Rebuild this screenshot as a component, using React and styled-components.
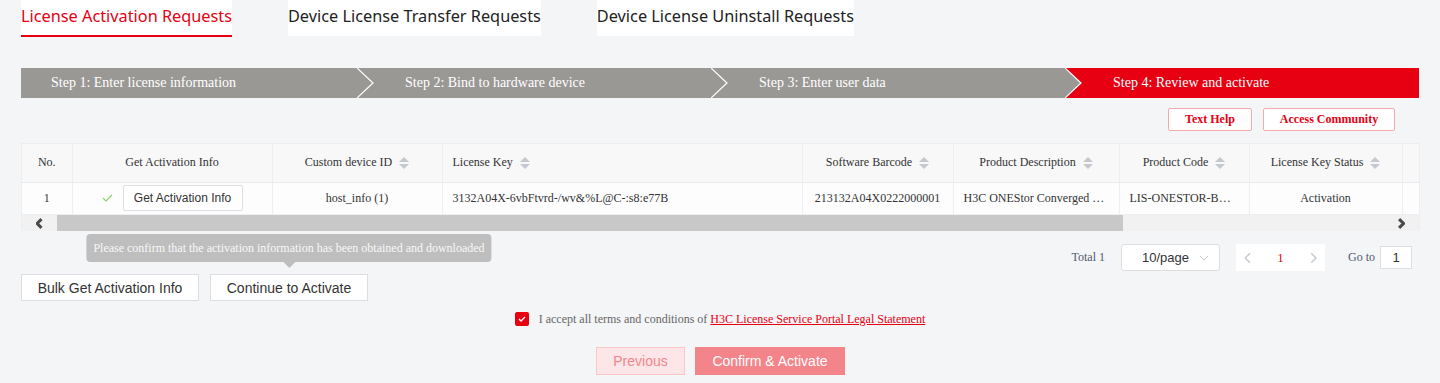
import React from "react";
import styled, { createGlobalStyle } from "styled-components";

const Global = createGlobalStyle`
  html, body { margin: 0; padding: 0; background: #f4f5f7; }
  body { font-family: "Liberation Serif", serif; color: #333; }
  * { box-sizing: border-box; }
`;

const Page = styled.div`
  width: 1440px;
  height: 383px;
  padding-left: 21px;
  overflow: hidden;
`;

const Tabs = styled.div`
  display: flex;
  gap: 56px;
  height: 37px;
`;

const Tab = styled.div`
  background: #fff;
  height: ${(p) => (p.$active ? "37px" : "36px")};
  font-family: "Noto Sans", sans-serif;
  font-size: 16.3px;
  line-height: 32px;
  color: ${(p) => (p.$active ? "#e60012" : "#222")};
  border-bottom: ${(p) => (p.$active ? "2px solid #e60012" : "none")};
  white-space: nowrap;
`;

const Steps = styled.div`
  display: flex;
  width: 1398px;
  height: 30px;
  margin-top: 31px;
`;

const Step = styled.div`
  position: relative;
  flex: ${(p) => (p.$first ? "0 0 336px" : "1 1 0")};
  background: ${(p) => (p.$active ? "#e60012" : "#9a9895")};
  color: #fff;
  font-size: 14px;
  line-height: 30px;
  padding-left: ${(p) => (p.$first ? "30px" : "48px")};
  white-space: nowrap;
`;

const Chevron = styled.svg`
  position: absolute;
  left: 0;
  top: 0;
`;

const HelpRow = styled.div`
  display: flex;
  justify-content: flex-end;
  gap: 11px;
  width: 1374px;
  margin-top: 10px;
`;

const HelpButton = styled.button`
  height: 23px;
  width: ${(p) => p.$w}px;
  background: #fff;
  border: 1px solid #f7a9ae;
  border-radius: 2px;
  color: #e60012;
  font-family: "Liberation Serif", serif;
  font-weight: bold;
  font-size: 12px;
  padding: 0;
`;

const TableWrap = styled.div`
  width: 1399px;
  margin-top: 12px;
  border: 1px solid #eceef1;
  border-bottom: none;
  background: #fff;
`;

const Table = styled.table`
  width: 100%;
  table-layout: fixed;
  border-collapse: collapse;
  font-family: "Liberation Serif", serif;
  font-size: 12px;
  color: #333;
`;

const Th = styled.th`
  height: 38px;
  background: #f8f8f9;
  font-weight: normal;
  text-align: ${(p) => p.$align || "center"};
  padding: 0 10px;
  border-right: 1px solid #eceef1;
  border-bottom: 1px solid #e8eaec;
  white-space: nowrap;
`;

const Td = styled.td`
  height: 32px;
  text-align: ${(p) => p.$align || "center"};
  padding: 0 10px;
  border-right: 1px solid #eceef1;
  white-space: nowrap;
  overflow: hidden;
  text-overflow: ellipsis;
  background: #fdfdfe;
`;

const HeadInner = styled.span`
  display: inline-flex;
  align-items: center;
  gap: 7px;
`;

const SortBox = styled.span`
  display: inline-flex;
  flex-direction: column;
  gap: 2px;
`;

const Tri = styled.span`
  width: 0;
  height: 0;
  border-left: 5px solid transparent;
  border-right: 5px solid transparent;
  ${(p) =>
    p.$up ? "border-bottom: 5px solid #c5c8ce;" : "border-top: 5px solid #c5c8ce;"}
`;

const CellAction = styled.div`
  display: flex;
  align-items: center;
  justify-content: center;
  gap: 10px;
`;

const SmallButton = styled.button`
  height: 26px;
  width: 120px;
  background: #fff;
  border: 1px solid #dcdee2;
  border-radius: 2px;
  font-family: "Liberation Sans", Arial, sans-serif;
  font-size: 12px;
  color: #333;
  padding: 0;
`;

const ScrollBar = styled.div`
  display: flex;
  height: 17px;
  background: #f1f1f1;
  border-top: 1px solid #eceef1;
`;

const ScrollArrow = styled.div`
  flex: 0 0 35px;
  display: flex;
  align-items: center;
  justify-content: center;
`;

const Thumb = styled.div`
  flex: 0 0 1066px;
  background: #c8c8c8;
`;

const Track = styled.div`
  flex: 1;
`;

const PagerRow = styled.div`
  display: flex;
  justify-content: flex-end;
  align-items: center;
  width: 1391px;
  height: 27px;
  margin-top: 13px;
  font-size: 12px;
  color: #515a6e;
`;

const Total = styled.span`
  margin-right: 16px;
`;

const Select = styled.div`
  width: 99px;
  height: 27px;
  border: 1px solid #dcdee2;
  border-radius: 3px;
  background: #fff;
  display: flex;
  align-items: center;
  padding: 0 10px 0 20px;
  justify-content: space-between;
  font-family: "Liberation Sans", Arial, sans-serif;
  font-size: 13px;
  color: #333;
  margin-right: 16px;
`;

const Pager = styled.div`
  width: 89px;
  height: 27px;
  background: #fff;
  display: flex;
  align-items: center;
  justify-content: space-between;
  padding: 0 8px;
  margin-right: 23px;
`;

const PageNum = styled.span`
  color: #e60012;
  font-size: 13px;
`;

const GoInput = styled.div`
  width: 32px;
  height: 23px;
  margin-left: 5px;
  border: 1px solid #dcdee2;
  background: #fff;
  display: flex;
  align-items: center;
  justify-content: center;
  font-family: "Liberation Sans", Arial, sans-serif;
  font-size: 13px;
  color: #333;
`;

const ActionRow = styled.div`
  display: flex;
  gap: 11px;
  margin-top: 3px;
`;

const ActionButton = styled.button`
  height: 27px;
  width: ${(p) => p.$w}px;
  background: #fff;
  border: 1px solid #dcdee2;
  font-family: "Liberation Sans", Arial, sans-serif;
  font-size: 14px;
  color: #333;
  padding: 0;
`;

const TipAnchor = styled.div`
  position: relative;
`;

const Tooltip = styled.div`
  position: absolute;
  left: 50%;
  bottom: calc(100% + 12px);
  transform: translateX(-50%);
  background: #bebebe;
  color: #f8f8f8;
  font-size: 12px;
  line-height: 28px;
  height: 28px;
  padding: 0 7px;
  border-radius: 4px;
  white-space: nowrap;
  &::after {
    content: "";
    position: absolute;
    left: 50%;
    top: 100%;
    margin-left: -6px;
    border-left: 6px solid transparent;
    border-right: 6px solid transparent;
    border-top: 6px solid #bebebe;
  }
`;

const AgreeRow = styled.div`
  display: flex;
  justify-content: center;
  align-items: center;
  gap: 10px;
  width: 1398px;
  margin-top: 11px;
  height: 14px;
  font-size: 12px;
  color: #666;
`;

const Check = styled.span`
  width: 14px;
  height: 14px;
  background: #e60012;
  border-radius: 2px;
  display: inline-flex;
  align-items: center;
  justify-content: center;
`;

const Link = styled.a`
  color: #e60012;
  text-decoration: underline;
`;

const FinalRow = styled.div`
  display: flex;
  justify-content: center;
  gap: 10px;
  width: 1399px;
  margin-top: 21px;
`;

const FinalButton = styled.button`
  height: 28px;
  width: ${(p) => p.$w}px;
  font-family: "Liberation Sans", Arial, sans-serif;
  font-size: 14px;
  padding: 0;
  border: 1px solid ${(p) => (p.$primary ? "#f3848a" : "#fcc6ca")};
  background: ${(p) => (p.$primary ? "#f3848a" : "#fde5e8")};
  color: ${(p) => (p.$primary ? "#fff" : "#f0878d")};
`;

const Sort = () => (
  <SortBox>
    <Tri $up />
    <Tri />
  </SortBox>
);

const ChevronSvg = () => (
  <Chevron width="18" height="30" viewBox="0 0 18 30">
    <polygon points="0,0 16,15 0,30" fill="#9a9895" />
    <polyline points="0,0 16,15 0,30" fill="none" stroke="#fff" strokeWidth="1.2" />
  </Chevron>
);

const Arrow = ({ dir, color = "#4a4a4a", w = 2.4, size = 10 }) => (
  <svg width={size * 0.6} height={size} viewBox="0 0 6 10">
    <polyline
      points={dir === "left" ? "5,1 1,5 5,9" : "1,1 5,5 1,9"}
      fill="none"
      stroke={color}
      strokeWidth={w}
    />
  </svg>
);

const steps = [
  "Step 1: Enter license information",
  "Step 2: Bind to hardware device",
  "Step 3: Enter user data",
  "Step 4: Review and activate",
];

const cols = [50, 200, 170, 360, 151, 166, 130, 153, 17];

export default function App() {
  return (
    <>
      <Global />
      <Page>
        <Tabs>
          <Tab $active>License Activation Requests</Tab>
          <Tab>Device License Transfer Requests</Tab>
          <Tab>Device License Uninstall Requests</Tab>
        </Tabs>

        <Steps>
          {steps.map((s, i) => (
            <Step key={s} $first={i === 0} $active={i === 3}>
              {i > 0 && <ChevronSvg />}
              {s}
            </Step>
          ))}
        </Steps>

        <HelpRow>
          <HelpButton $w={84}>Text Help</HelpButton>
          <HelpButton $w={132}>Access Community</HelpButton>
        </HelpRow>

        <TableWrap>
          <Table>
            <colgroup>
              {cols.map((w, i) => (
                <col key={i} style={{ width: w }} />
              ))}
            </colgroup>
            <thead>
              <tr>
                <Th>No.</Th>
                <Th>Get Activation Info</Th>
                <Th>
                  <HeadInner>Custom device ID<Sort /></HeadInner>
                </Th>
                <Th $align="left">
                  <HeadInner>License Key<Sort /></HeadInner>
                </Th>
                <Th>
                  <HeadInner>Software Barcode<Sort /></HeadInner>
                </Th>
                <Th>
                  <HeadInner>Product Description<Sort /></HeadInner>
                </Th>
                <Th>
                  <HeadInner>Product Code<Sort /></HeadInner>
                </Th>
                <Th>
                  <HeadInner>License Key Status<Sort /></HeadInner>
                </Th>
                <Th />
              </tr>
            </thead>
            <tbody>
              <tr>
                <Td>1</Td>
                <Td>
                  <CellAction>
                    <svg width="11" height="8" viewBox="0 0 11 8">
                      <polyline points="1,4 4,7 10,1" fill="none" stroke="#8ccf66" strokeWidth="1.1" />
                    </svg>
                    <SmallButton>Get Activation Info</SmallButton>
                  </CellAction>
                </Td>
                <Td>host_info (1)</Td>
                <Td $align="left">3132A04X-6vbFtvrd-/wv&amp;%L@C-:s8:e77B</Td>
                <Td>213132A04X0222000001</Td>
                <Td $align="left">H3C ONEStor Converged Storage License</Td>
                <Td $align="left">LIS-ONESTOR-BASE-1</Td>
                <Td>Activation</Td>
                <Td />
              </tr>
            </tbody>
          </Table>
          <ScrollBar>
            <ScrollArrow>
              <Arrow dir="left" w={2.8} size={11} />
            </ScrollArrow>
            <Thumb />
            <Track />
            <ScrollArrow>
              <Arrow dir="right" w={2.8} size={11} />
            </ScrollArrow>
          </ScrollBar>
        </TableWrap>

        <PagerRow>
          <Total>Total 1</Total>
          <Select>
            <span>10/page</span>
            <svg width="10" height="6" viewBox="0 0 10 6">
              <polyline points="1,1 5,5 9,1" fill="none" stroke="#c5c8ce" strokeWidth="1" />
            </svg>
          </Select>
          <Pager>
            <Arrow dir="left" color="#c5c8ce" w={1.2} size={12} />
            <PageNum>1</PageNum>
            <Arrow dir="right" color="#c5c8ce" w={1.2} size={12} />
          </Pager>
          <span>Go to</span>
          <GoInput>1</GoInput>
        </PagerRow>

        <ActionRow>
          <ActionButton $w={178}>Bulk Get Activation Info</ActionButton>
          <TipAnchor>
            <Tooltip>Please confirm that the activation information has been obtained and downloaded</Tooltip>
            <ActionButton $w={158}>Continue to Activate</ActionButton>
          </TipAnchor>
        </ActionRow>

        <AgreeRow>
          <Check>
            <svg width="8" height="6" viewBox="0 0 8 6">
              <polyline points="1,3 3,5 7,1" fill="none" stroke="#fff" strokeWidth="1.3" />
            </svg>
          </Check>
          <span>
            I accept all terms and conditions of <Link>H3C License Service Portal Legal Statement</Link>
          </span>
        </AgreeRow>

        <FinalRow>
          <FinalButton $w={89}>Previous</FinalButton>
          <FinalButton $w={150} $primary>Confirm &amp; Activate</FinalButton>
        </FinalRow>
      </Page>
    </>
  );
}
